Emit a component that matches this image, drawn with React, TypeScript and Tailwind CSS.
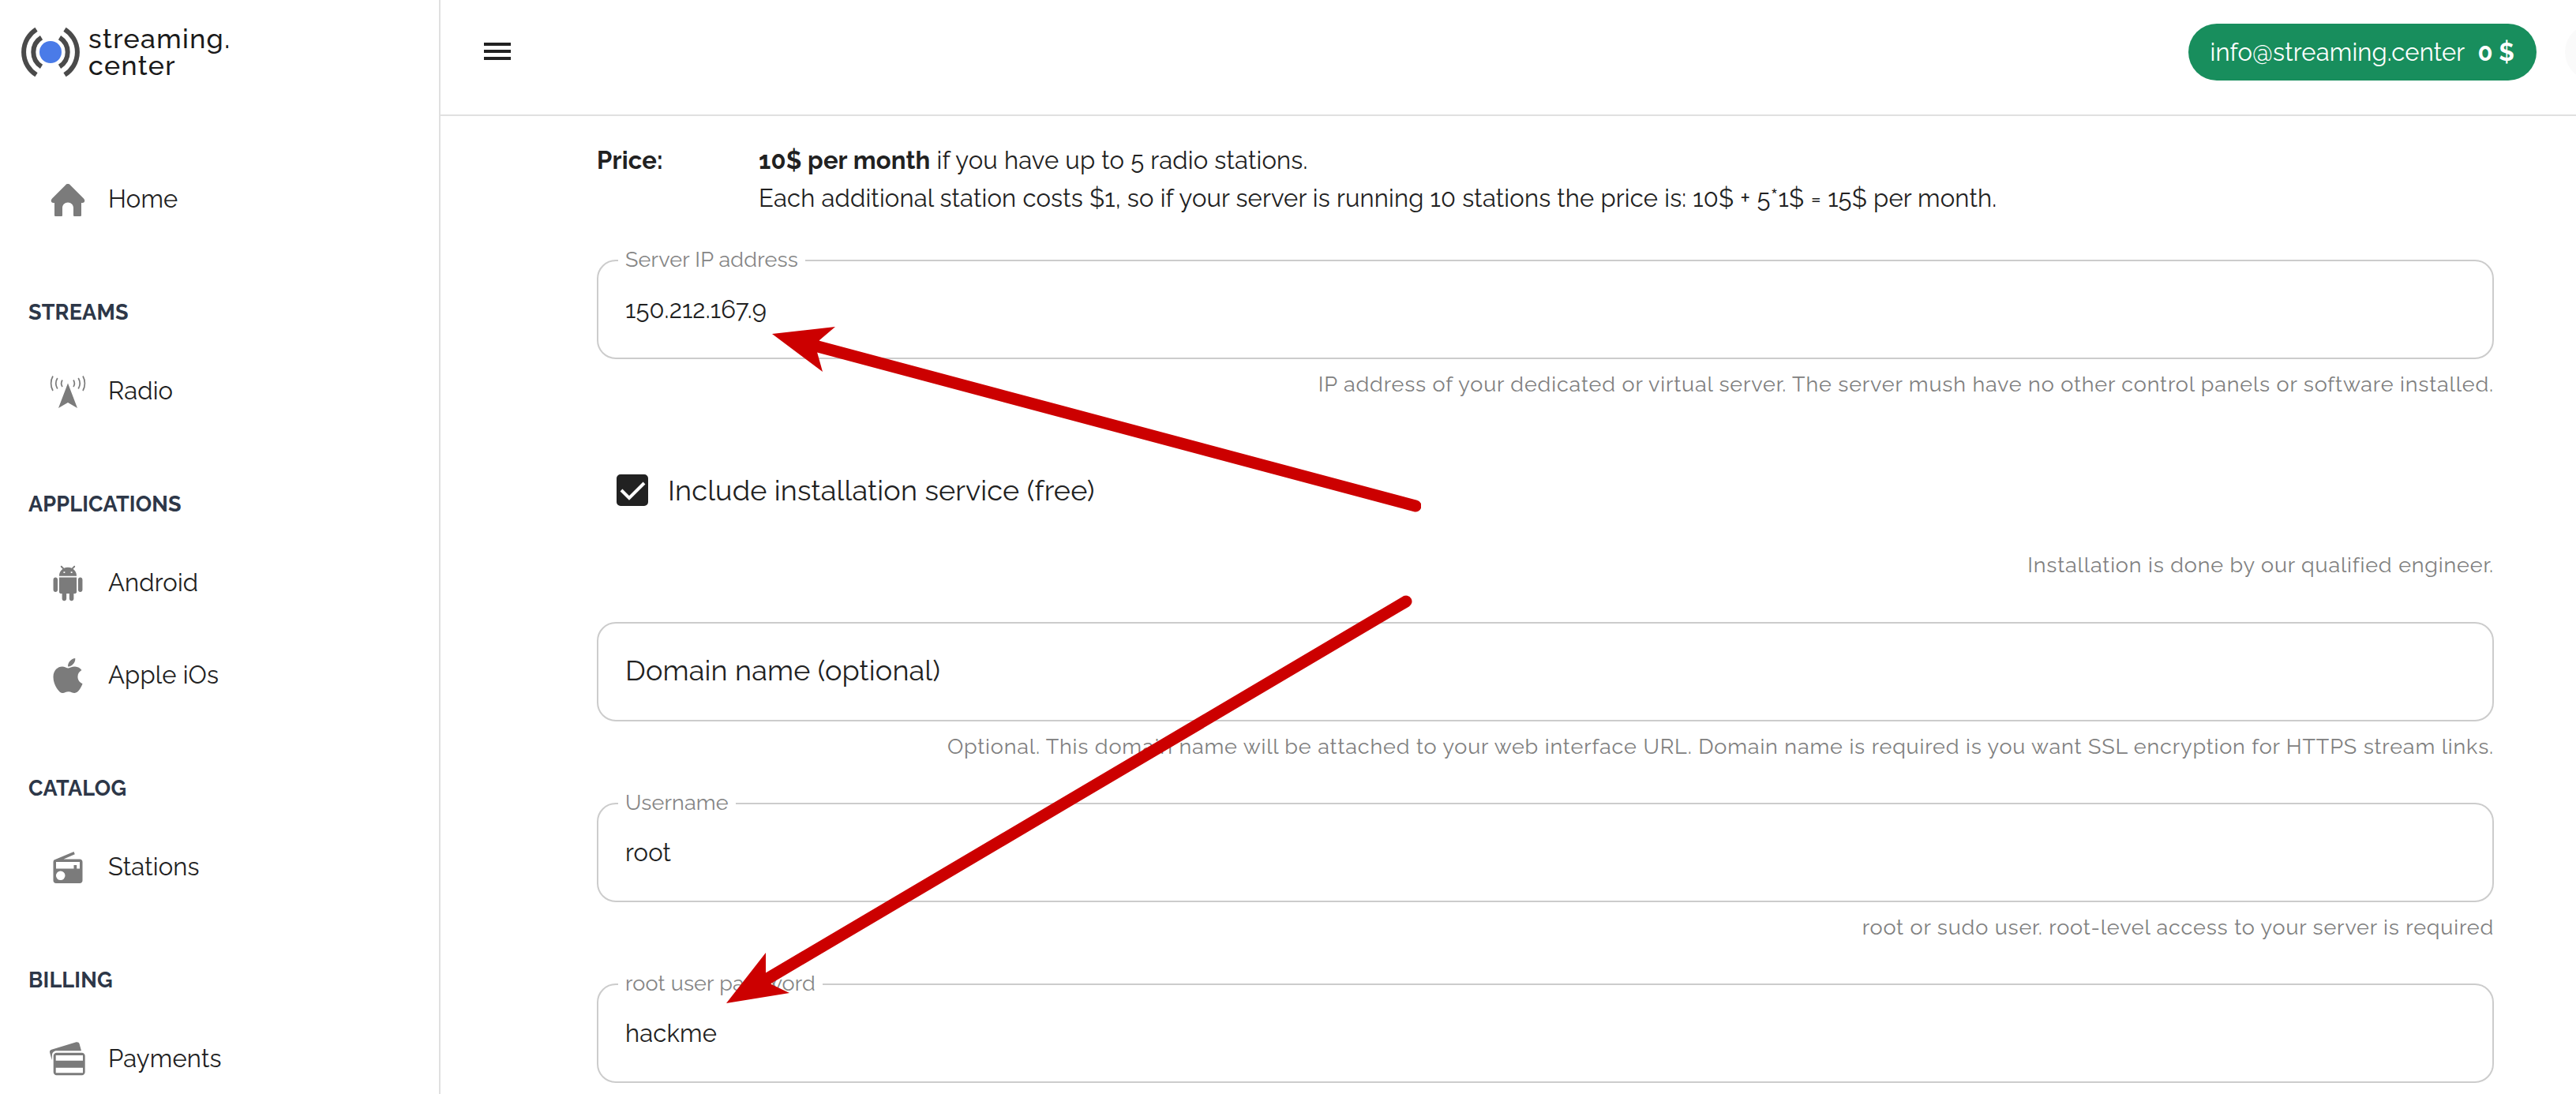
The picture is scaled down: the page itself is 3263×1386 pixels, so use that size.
import React from 'react';
import { FaApple } from 'react-icons/fa';

type IconProps = { className?: string };

const HomeIcon: React.FC<IconProps> = ({ className }) => (
  <svg viewBox="0 -1 48 48" className={className} fill="currentColor" aria-hidden="true">
    <path d="M24 3c1.200 0 2.200.5 3 1.400L44 21.500c2.400 2.400 1.200 5.500-1.500 5.500H41v15.500c0 1.100-.6 1.500-1.500 1.500h-7c-1 0-1.500-.5-1.500-1.500V33.500c0-4-3-7-7-7s-7 3-7 7v9c0 1-.5 1.500-1.500 1.500h-7C7.600 44 7 43.600 7 42.500V27H5.500C2.800 27 1.600 23.900 4 21.500L21 4.400C21.800 3.500 22.800 3 24 3z" />
  </svg>
);

const RadioIcon: React.FC<IconProps> = ({ className }) => (
  <svg viewBox="0 0 48 48" className={className} aria-hidden="true">
    <path d="M24 13.500 36 45l-12-7-12 7z" fill="currentColor" />
    <g fill="none" stroke="currentColor" strokeWidth="1.700">
      <path d="M5 4.500c-3.200 5.500-3.200 13 0 18.500M10.800 7c-2.400 4-2.400 9.500 0 13.500M17 9.500c-1.600 2.500-1.600 6 0 8.500" />
      <path d="M43 4.500c3.200 5.500 3.200 13 0 18.500M37.200 7c2.400 4 2.400 9.500 0 13.500M31 9.500c1.600 2.500 1.600 6 0 8.500" />
    </g>
  </svg>
);

const AndroidIcon: React.FC<IconProps> = ({ className }) => (
  <svg viewBox="-1 -1 26 26" className={className} fill="currentColor" aria-hidden="true">
    <path d="M6 18c0 .55.45 1 1 1h1v3.500c0 .83.67 1.500 1.500 1.500s1.500-.67 1.500-1.500V19h2v3.500c0 .83.67 1.500 1.500 1.500s1.500-.67 1.500-1.500V19h1c.55 0 1-.45 1-1V8H6v10zM3.500 8C2.670 8 2 8.670 2 9.500v7c0 .83.67 1.500 1.500 1.500S5 17.330 5 16.500v-7C5 8.670 4.330 8 3.500 8zm17 0c-.83 0-1.500.67-1.500 1.500v7c0 .83.67 1.500 1.500 1.500s1.500-.67 1.500-1.500v-7c0-.83-.67-1.500-1.500-1.500zm-4.970-5.840l1.300-1.300c.2-.2.2-.51 0-.71-.2-.2-.51-.2-.71 0l-1.480 1.480C13.850 1.230 12.950 1 12 1c-.96 0-1.860.23-2.660.63L7.850.15c-.2-.2-.51-.2-.71 0-.2.2-.2.51 0 .71l1.310 1.310C6.970 3.260 6 5.010 6 7h12c0-1.990-.97-3.750-2.470-4.840zM10 5H9V4h1v1zm5 0h-1V4h1v1z" />
  </svg>
);

const AppleIcon: React.FC<IconProps> = ({ className }) => <FaApple className={`${className} scale-105`} />;

const StationsIcon: React.FC<IconProps> = ({ className }) => (
  <svg viewBox="0 0 48 48" className={className} fill="currentColor" aria-hidden="true">
    <path
      fillRule="evenodd"
      d="M6.500 14.500 31.500 4l1.300 3.200L18.500 13.500H39c2 0 3.500 1.500 3.500 3.500v23.500c0 2-1.500 3.500-3.500 3.500H9c-2 0-3.500-1.500-3.500-3.500V17c0-1 .4-1.900 1-2.500zM9 17v8.500h22.500V21h3.700v4.500H39V17zM14.700 28.500a5.800 5.800 0 1 0 0 11.600 5.800 5.800 0 0 0 0-11.600z"
    />
  </svg>
);

const PaymentsIcon: React.FC<IconProps> = ({ className }) => (
  <svg viewBox="0 0 48 48" className={className} fill="currentColor" aria-hidden="true">
    <path d="M3.700 25 1.100 15.500c-.5-2 .6-3.300 2.200-3.800L34.500 2.300c2-.5 3.600.4 4.100 2.200L41 13.200H9.700c-3.500 0-5.800 2.500-5.800 6z" />
    <path
      fillRule="evenodd"
      d="M9.700 15.700h32c2.200 0 4 1.800 4 4v20.600c0 2.200-1.800 4-4 4h-32c-2.200 0-4-1.800-4-4V19.700c0-2.200 1.800-4 4-4zM8.700 19v6.700h34.300V19zM8.700 34.700v6.600h34.300v-6.600z"
    />
  </svg>
);

const Logo: React.FC = () => (
  <a href="#" className="flex items-center gap-2.5 px-[26px] pt-8">
    <svg viewBox="0 0 76 68" className="h-[68px] w-[76px] shrink-0" aria-hidden="true">
      <circle cx="38" cy="34" r="14" fill="#4a7be8" />
      <g fill="none" stroke="#4a4a4a" strokeWidth="6">
        <path d="M20 5.200a34 34 0 0 0 0 57.600M56 5.200a34 34 0 0 1 0 57.600" />
        <path d="M26.500 15.600a21.700 21.700 0 0 0 0 36.800M49.500 15.600a21.700 21.700 0 0 1 0 36.800" />
      </g>
    </svg>
    <span className="text-[34px] leading-[34px] font-medium tracking-[0.04em] text-[#1a1a1a]">
      streaming.
      <br />
      center
    </span>
  </a>
);

const sections = [
  { title: '', items: [{ label: 'Home', icon: HomeIcon }] },
  { title: 'Streams', items: [{ label: 'Radio', icon: RadioIcon }] },
  {
    title: 'Applications',
    items: [
      { label: 'Android', icon: AndroidIcon },
      { label: 'Apple iOs', icon: AppleIcon },
    ],
  },
  { title: 'Catalog', items: [{ label: 'Stations', icon: StationsIcon }] },
  { title: 'Billing', items: [{ label: 'Payments', icon: PaymentsIcon }] },
];

const Sidebar: React.FC = () => (
  <aside className="w-[558px] shrink-0 border-r-2 border-[#e0e0e0]">
    <Logo />
    <nav className="mt-[94px]">
      {sections.map((section) => (
        <div key={section.title}>
          {section.title && (
            <h2 className="px-9 pt-[69px] pb-[25px] text-[27px] leading-8 font-bold text-[#2d3748] uppercase">
              {section.title}
            </h2>
          )}
          {section.items.map(({ label, icon: Icon }) => (
            <a key={label} href="#" className="flex h-[117px] items-center gap-[27px] pl-[62px] text-[31px] text-[#212121]">
              <Icon className="size-12 shrink-0 text-[#7b7b7b]" />
              {label}
            </a>
          ))}
        </div>
      ))}
    </nav>
  </aside>
);

const Header: React.FC = () => (
  <header className="flex h-[147px] items-start justify-between border-b-2 border-[#e0e0e0] pt-[30px] pl-[50px]">
    <button type="button" aria-label="Toggle menu" className="flex h-[70px] items-center text-[#212121]">
      <svg viewBox="0 0 44 44" className="size-11" fill="currentColor" aria-hidden="true">
        <path d="M5 11h34v4H5zM5 20h34v4H5zM5 29h34v4H5z" />
      </svg>
    </button>
    <div className="flex overflow-hidden">
      <button type="button" className="flex h-[72px] items-center gap-4 rounded-full bg-[#188e5d] px-7 text-[31px] text-white">
        info@streaming.center <b>0 $</b>
      </button>
      <button type="button" aria-label="Account" className="-mr-[58px] ml-9 size-[72px] rounded-full bg-[#fafafa]" />
    </div>
  </header>
);

const Helper: React.FC<{ children: React.ReactNode }> = ({ children }) => (
  <p className="mt-4 text-right text-[27px] leading-8 tracking-[0.03em] text-[#808080]">{children}</p>
);

type FieldProps = {
  id: string;
  label: string;
  helper?: string;
  value?: string;
};

const Field: React.FC<FieldProps> = ({ id, label, helper, value }) => (
  <div className="h-[229px]">
    <div className="relative">
      <input
        id={id}
        defaultValue={value}
        placeholder={value ? undefined : label}
        aria-label={value ? undefined : label}
        className="block h-[126px] w-full rounded-[24px] border-2 border-[#cccccc] px-[34px] text-[31px] text-[#212121] outline-none placeholder:text-[36px] placeholder:text-[#212121] placeholder:opacity-100"
      />
      {value && (
        <label htmlFor={id} className="absolute -top-4 left-[27px] bg-white px-[9px] text-[27px] leading-8 text-[#858585]">
          {label}
        </label>
      )}
    </div>
    {helper && <Helper>{helper}</Helper>}
  </div>
);

// hand-drawn pointers to the IP and password fields
const Arrows: React.FC = () => (
  <svg viewBox="0 0 900 880" className="pointer-events-none absolute top-[252px] left-[342px] h-[880px] w-[900px]" aria-hidden="true">
    <g fill="none" stroke="#cc0000" strokeWidth="15" strokeLinecap="round">
      <path d="M136 40 893 242" />
      <path d="M72 841 881 363" />
    </g>
    <g fill="#cc0000">
      <path d="M78 24 158 15l-20 17-3 15 7 25z" />
      <path d="M20 872 70 808v27l7 13 23 11z" />
    </g>
  </svg>
);

const App: React.FC = () => (
  <div className="flex h-screen overflow-hidden bg-white font-['Raleway',Lato,sans-serif] tracking-[0.01em]">
    <Sidebar />
    <div className="min-w-0 flex-1">
      <Header />
      <main className="relative pr-[104px] pl-[198px]">
        <dl className="flex pt-8 text-[31px] leading-12 text-[#212121]">
          <dt className="w-[205px] font-bold">Price:</dt>
          <dd>
            <b>10$ per month</b> if you have up to 5 radio stations.
            <br />
            Each additional station costs $1, so if your server is running 10 stations the price is: 10$ + 5*1$ = 15$ per
            month.
          </dd>
        </dl>
        <form className="pt-[54px]">
          <Field
            id="ip"
            label="Server IP address"
            value="150.212.167.9"
            helper="IP address of your dedicated or virtual server. The server mush have no other control panels or software installed."
          />
          <div className="h-[230px]">
            <label className="flex h-[126px] items-center gap-[25px] pl-[25px] text-[36px] text-[#212121]">
              <span className="relative flex size-10">
                <input type="checkbox" defaultChecked className="peer size-10 appearance-none rounded-[5px] border-4 border-[#212121] checked:bg-[#212121]" />
                <svg viewBox="0 0 40 40" className="pointer-events-none absolute inset-0 hidden size-10 peer-checked:block" aria-hidden="true">
                  <path d="M6 20l10 10 19-19" fill="none" stroke="#ffffff" strokeWidth="4" />
                </svg>
              </span>
              Include installation service (free)
            </label>
            <Helper>Installation is done by our qualified engineer.</Helper>
          </div>
          <Field
            id="domain"
            label="Domain name (optional)"
            helper="Optional. This domain name will be attached to your web interface URL. Domain name is required is you want SSL encryption for HTTPS stream links."
          />
          <Field id="username" label="Username" value="root" helper="root or sudo user. root-level access to your server is required" />
          <Field id="password" label="root user password" value="hackme" />
        </form>
        <Arrows />
      </main>
    </div>
  </div>
);

export default App;
